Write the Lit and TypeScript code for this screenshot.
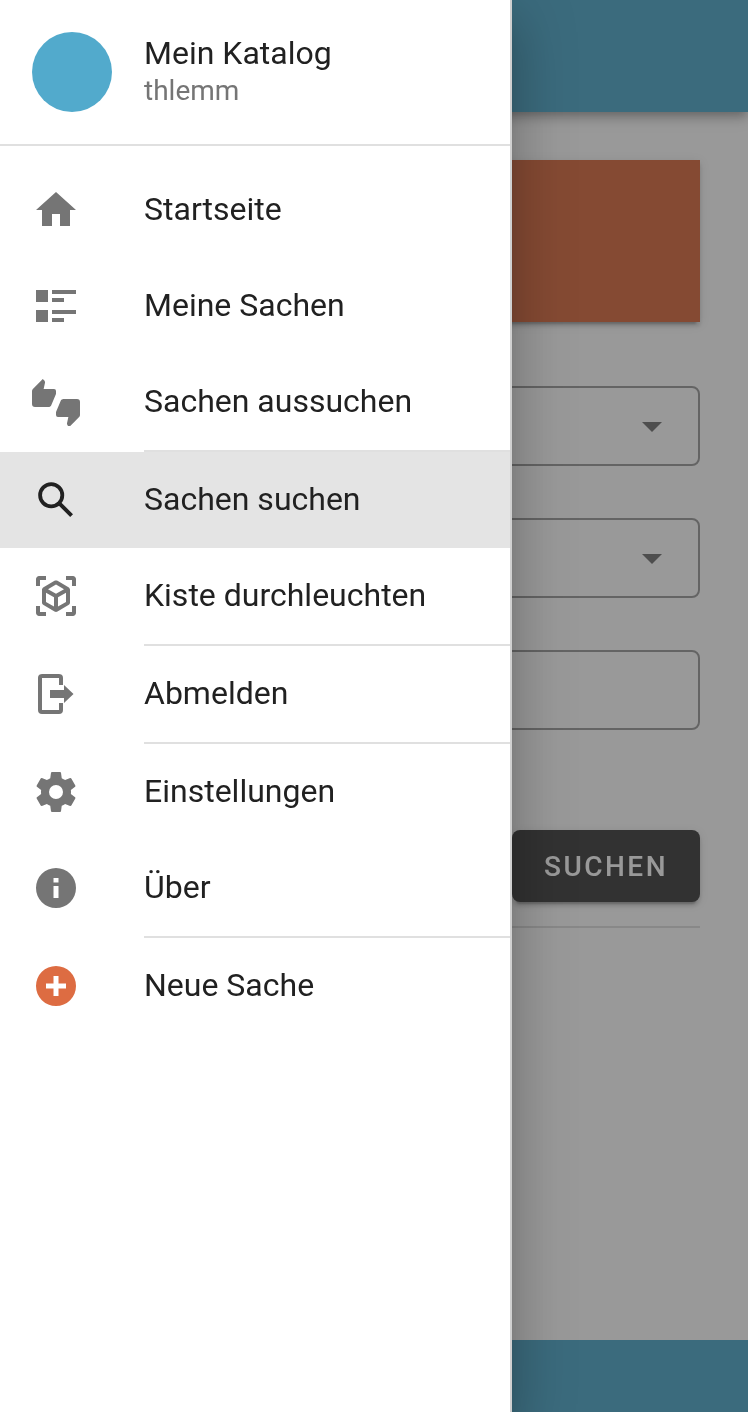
import { LitElement, html, css, svg } from 'lit';
import { customElement } from 'lit/decorators.js';
import { classMap } from 'lit/directives/class-map.js';

const ICONS: Record<string, string> = {
  home: 'M10,20V14H14V20H19V12H22L12,3L2,12H5V20H10Z',
  list: 'M2,4H8V10H2V4M10,4H22V6H10V4M10,8H16V10H10V8M2,14H8V20H2V14M10,14H22V16H10V14M10,18H16V20H10V18Z',
  thumbs:
    'M22.5,10.5H15.75C15.13,10.5 14.6,10.88 14.37,11.41L12.11,16.7C12.04,16.87 12,17.06 12,17.25V18.5A1,1 0 0,0 13,19.5H18.18L17.5,22.68V22.92C17.5,23.23 17.63,23.5 17.83,23.72L18.62,24.5L23.56,19.56C23.83,19.29 24,18.91 24,18.5V12A1.5,1.5 0 0,0 22.5,10.5M12,6.5A1,1 0 0,0 11,5.5H5.82L6.5,2.32V2.09C6.5,1.78 6.37,1.5 6.17,1.29L5.38,0.5L0.44,5.44C0.17,5.71 0,6.09 0,6.5V13A1.5,1.5 0 0,0 1.5,14.5H8.25C8.87,14.5 9.4,14.12 9.63,13.59L11.89,8.3C11.96,8.13 12,7.94 12,7.75V6.5Z',
  search:
    'M9.6,3.1A6.5,6.5 0 1,1 9.6,16.1A6.5,6.5 0 1,1 9.6,3.1ZM9.6,5A4.6,4.6 0 1,0 9.6,14.2A4.6,4.6 0 1,0 9.6,5ZM14.5,13.1L20.5,19.1L19.1,20.5L13.1,14.5Z',
  cube:
    'M17,22V20H20V17H22V20.5C22,20.89 21.84,21.24 21.54,21.54C21.24,21.84 20.89,22 20.5,22H17M7,22H3.5C3.11,22 2.76,21.84 2.46,21.54C2.16,21.24 2,20.89 2,20.5V17H4V20H7V22M17,2H20.5C20.89,2 21.24,2.16 21.54,2.46C21.84,2.76 22,3.11 22,3.5V7H20V4H17V2M7,2V4H4V7H2V3.5C2,3.11 2.16,2.76 2.46,2.46C2.76,2.16 3.11,2 3.5,2H7M13,17.25L17,14.95V10.36L13,12.66V17.25M12,10.92L16,8.63L12,6.28L8,8.63L12,10.92M7,14.95L11,17.25V12.66L7,10.36V14.95M18.23,7.59C18.73,7.91 19,8.34 19,8.91V15.23C19,15.8 18.73,16.23 18.23,16.55L12.75,19.73C12.25,20.05 11.75,20.05 11.25,19.73L5.77,16.55C5.27,16.23 5,15.8 5,15.23V8.91C5,8.34 5.27,7.91 5.77,7.59L11.25,4.41C11.5,4.28 11.75,4.22 12,4.22C12.25,4.22 12.5,4.28 12.75,4.41L18.23,7.59Z',
  logout:
    'M5,2H13.5A2,2 0 0,1 15.5,4V7.5H13.5V4H5V20H13.5V16.5H15.5V20A2,2 0 0,1 13.5,22H5A2,2 0 0,1 3,20V4A2,2 0 0,1 5,2M9,10H16V7.5L20.75,12L16,16.5V14H9V10Z',
  cog:
    'M12,15.5A3.5,3.5 0 0,1 8.5,12A3.5,3.5 0 0,1 12,8.5A3.5,3.5 0 0,1 15.5,12A3.5,3.5 0 0,1 12,15.5M19.43,12.97C19.47,12.65 19.5,12.33 19.5,12C19.5,11.67 19.47,11.34 19.43,11L21.54,9.37C21.73,9.22 21.78,8.95 21.66,8.73L19.66,5.27C19.54,5.05 19.27,4.96 19.05,5.05L16.56,6.05C16.04,5.66 15.5,5.32 14.87,5.07L14.5,2.42C14.46,2.18 14.25,2 14,2H10C9.75,2 9.54,2.18 9.5,2.42L9.13,5.07C8.5,5.32 7.96,5.66 7.44,6.05L4.95,5.05C4.73,4.96 4.46,5.05 4.34,5.27L2.34,8.73C2.21,8.95 2.27,9.22 2.46,9.37L4.57,11C4.53,11.34 4.5,11.67 4.5,12C4.5,12.33 4.53,12.65 4.57,12.97L2.46,14.63C2.27,14.78 2.21,15.05 2.34,15.27L4.34,18.73C4.46,18.95 4.73,19.03 4.95,18.95L7.44,17.94C7.96,18.34 8.5,18.68 9.13,18.93L9.5,21.58C9.54,21.82 9.75,22 10,22H14C14.25,22 14.46,21.82 14.5,21.58L14.87,18.93C15.5,18.67 16.04,18.34 16.56,17.94L19.05,18.95C19.27,19.03 19.54,18.95 19.66,18.73L21.66,15.27C21.78,15.05 21.73,14.78 21.54,14.63L19.43,12.97Z',
  info: 'M13.25,9.3H10.75V7H13.25M13.25,17H10.75V11H13.25M12,2A10,10 0 0,0 2,12A10,10 0 0,0 12,22A10,10 0 0,0 22,12A10,10 0 0,0 12,2Z',
  plus: 'M17,13.25H13.25V17H10.75V13.25H7V10.75H10.75V7H13.25V10.75H17M12,2A10,10 0 0,0 2,12A10,10 0 0,0 12,22A10,10 0 0,0 22,12A10,10 0 0,0 12,2Z',
};

interface NavItem {
  label: string;
  icon: string;
  active?: boolean;
  accent?: boolean;
  dividerAfter?: boolean;
}

const NAV: NavItem[] = [
  { label: 'Startseite', icon: 'home' },
  { label: 'Meine Sachen', icon: 'list' },
  { label: 'Sachen aussuchen', icon: 'thumbs', dividerAfter: true },
  { label: 'Sachen suchen', icon: 'search', active: true },
  { label: 'Kiste durchleuchten', icon: 'cube', dividerAfter: true },
  { label: 'Abmelden', icon: 'logout', dividerAfter: true },
  { label: 'Einstellungen', icon: 'cog' },
  { label: 'Über', icon: 'info', dividerAfter: true },
  { label: 'Neue Sache', icon: 'plus', accent: true },
];

@customElement('app-root')
export class AppRoot extends LitElement {
  static styles = css`
    :host {
      display: block;
      position: relative;
      width: 748px;
      height: 1412px;
      overflow: hidden;
      background: #fff;
      font-family: Roboto, sans-serif;
    }

    .page {
      display: flex;
      flex-direction: column;
      height: 100%;
      will-change: transform;
    }

    .app-bar {
      height: 112px;
      flex: none;
      background: #52aacc;
      box-shadow: 0 4px 8px -2px rgba(0, 0, 0, 0.2), 0 8px 10px 0 rgba(0, 0, 0, 0.14),
        0 2px 20px 0 rgba(0, 0, 0, 0.12);
    }

    .content {
      display: flex;
      flex-direction: column;
      padding: 48px 48px 0;
    }

    .card {
      height: 162px;
      background: #da6d44;
      box-shadow: 0 6px 2px -4px rgba(0, 0, 0, 0.2), 0 4px 4px 0 rgba(0, 0, 0, 0.14),
        0 2px 10px 0 rgba(0, 0, 0, 0.12);
    }

    .field {
      position: relative;
      height: 80px;
      box-sizing: border-box;
      margin-top: 52px;
      border: 2px solid rgba(0, 0, 0, 0.38);
      border-radius: 8px;
    }

    .card + .field {
      margin-top: 64px;
    }

    .arrow {
      position: absolute;
      top: 14px;
      right: 22px;
      width: 48px;
      height: 48px;
      fill: rgba(0, 0, 0, 0.54);
    }

    .search-btn {
      align-self: flex-end;
      width: 188px;
      height: 72px;
      margin-top: 100px;
      padding: 0;
      border: none;
      border-radius: 8px;
      background: #424242;
      color: #fff;
      font: 500 28px Roboto, sans-serif;
      letter-spacing: 2.5px;
      box-shadow: 0 6px 2px -4px rgba(0, 0, 0, 0.2), 0 4px 4px 0 rgba(0, 0, 0, 0.14),
        0 2px 10px 0 rgba(0, 0, 0, 0.12);
    }

    .rule {
      height: 2px;
      margin-top: 24px;
      background: rgba(0, 0, 0, 0.12);
    }

    .footer {
      height: 72px;
      flex: none;
      margin-top: auto;
      background: #52aacc;
    }

    .scrim {
      position: absolute;
      inset: 0;
      background: rgba(33, 33, 33, 0.46);
    }

    .drawer {
      position: absolute;
      top: 0;
      bottom: 0;
      left: 0;
      width: 512px;
      box-sizing: border-box;
      display: flex;
      flex-direction: column;
      background: #fff;
      border-right: 2px solid #d0d0d0;
      box-shadow: 0 16px 20px -10px rgba(0, 0, 0, 0.2), 0 32px 48px 4px rgba(0, 0, 0, 0.14),
        0 12px 60px 10px rgba(0, 0, 0, 0.12);
      will-change: transform;
    }

    .header {
      display: flex;
      align-items: center;
      gap: 32px;
      height: 144px;
      flex: none;
      padding-left: 32px;
    }

    .avatar {
      width: 80px;
      height: 80px;
      border-radius: 50%;
      background: #52aacc;
    }

    .header-text {
      padding-bottom: 2px;
    }

    .title {
      font-size: 32px;
      line-height: 38px;
      color: #212121;
    }

    .subtitle {
      font-size: 28px;
      line-height: 34px;
      margin-top: 2px;
      color: #757575;
    }

    .divider {
      height: 2px;
      flex: none;
      background: #e0e0e0;
    }

    .divider.inset {
      margin-left: 144px;
    }

    nav {
      display: flex;
      flex-direction: column;
      padding-top: 16px;
    }

    .item {
      display: flex;
      align-items: center;
      gap: 64px;
      height: 96px;
      flex: none;
      padding-left: 32px;
      font-size: 32px;
      color: #212121;
    }

    .item span {
      padding-bottom: 2px;
    }

    .item.active {
      background: #e4e4e4;
    }

    .item svg {
      width: 48px;
      height: 48px;
      flex: none;
      fill: #757575;
    }

    .item.active svg {
      fill: #212121;
    }

    .item.accent svg {
      fill: #dd6c42;
    }
  `;

  private renderIcon(name: string) {
    return html`<svg viewBox="0 0 24 24">${svg`<path d=${ICONS[name]}></path>`}</svg>`;
  }

  private renderItem(item: NavItem) {
    return html`
      <div class=${classMap({ item: true, active: !!item.active, accent: !!item.accent })}>
        ${this.renderIcon(item.icon)}
        <span>${item.label}</span>
      </div>
      ${item.dividerAfter ? html`<div class="divider inset"></div>` : ''}
    `;
  }

  private renderField(withArrow: boolean) {
    return html`
      <div class="field">
        ${withArrow
          ? html`<svg class="arrow" viewBox="0 0 24 24">${svg`<path d="M7,10L12,15L17,10H7Z"></path>`}</svg>`
          : ''}
      </div>
    `;
  }

  render() {
    return html`
      <div class="page">
        <div class="app-bar"></div>
        <div class="content">
          <div class="card"></div>
          ${this.renderField(true)} ${this.renderField(true)} ${this.renderField(false)}
          <button class="search-btn">SUCHEN</button>
          <div class="rule"></div>
        </div>
        <div class="footer"></div>
      </div>
      <div class="scrim"></div>
      <aside class="drawer">
        <div class="header">
          <div class="avatar"></div>
          <div class="header-text">
            <div class="title">Mein Katalog</div>
            <div class="subtitle">thlemm</div>
          </div>
        </div>
        <div class="divider"></div>
        <nav>${NAV.map((item) => this.renderItem(item))}</nav>
      </aside>
    `;
  }
}
